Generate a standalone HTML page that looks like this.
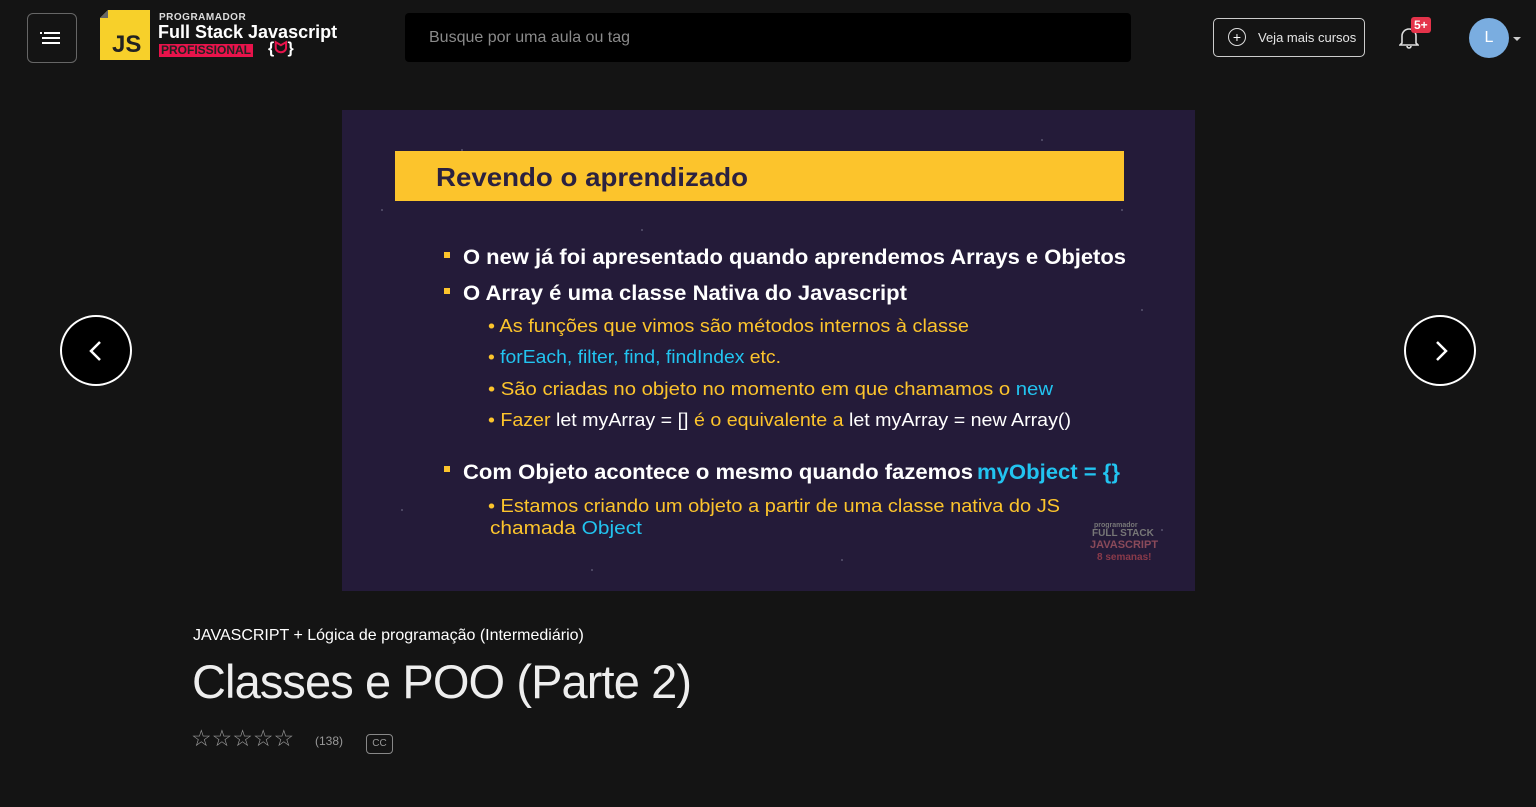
<!DOCTYPE html>
<html><head><meta charset="utf-8"><style>
body{margin:0;width:1536px;height:807px;background:#141414;overflow:hidden;font-family:"Liberation Sans",sans-serif;position:relative}
.a{position:absolute}
</style></head><body>
<div class="a" style="left:27px;top:13px;width:50px;height:50px;border:1px solid #666;border-radius:6px;box-sizing:border-box"></div>
<svg class="a" style="left:40px;top:30px" width="22" height="16"><rect x="0" y="2" width="2" height="2" fill="#fff"/><rect x="4" y="2" width="16" height="2" fill="#fff"/><rect x="2" y="7" width="18" height="2" fill="#fff"/><rect x="2" y="12" width="18" height="2" fill="#fff"/></svg>
<svg class="a" style="left:100px;top:10px" width="52" height="50"><path d="M8 0H50V50H0V8Z" fill="#f7d02a"/><path d="M0 8L8 0V8Z" fill="#666"/><text x="12" y="42" font-family="Liberation Sans" font-weight="bold" font-size="24" fill="#222">JS</text></svg>
<div class="a" style="left:159px;top:12px;color:#ddd;font-weight:bold;font-size:10px;letter-spacing:.5px">PROGRAMADOR</div>
<div class="a" style="left:158px;top:22px;color:#fff;font-weight:bold;font-size:18px">Full Stack Javascript</div>
<div class="a" style="left:159px;top:44px;background:#e8134b;color:#222;font-weight:bold;font-size:12px;line-height:13px;padding:0 2px">PROFISSIONAL</div>
<div class="a" style="left:268px;top:40px;color:#fff;font-weight:bold;font-size:16px">{<span style="color:#e8134b">ᗢ</span>}</div>
<div class="a" style="left:405px;top:13px;width:726px;height:49px;background:#000;border-radius:4px"></div>
<div class="a" style="left:429px;top:29px;color:#8a8a8a;font-size:16px">Busque por uma aula ou tag</div>
<div class="a" style="left:1213px;top:18px;width:152px;height:39px;border:1px solid #ccc;border-radius:5px;box-sizing:border-box"></div>
<div class="a" style="left:1228px;top:28px;width:18px;height:18px;border:1px solid #ddd;border-radius:50%;box-sizing:border-box;color:#fff;font-size:14px;line-height:16px;text-align:center">+</div>
<div class="a" style="left:1258px;top:30px;color:#e5e5e5;font-size:13px">Veja mais cursos</div>
<svg class="a" style="left:1399px;top:27px" width="20" height="22"><path d="M3 16V9a7 7 0 0 1 14 0v7l2 2H1z M8 19a2 2 0 0 0 4 0" fill="none" stroke="#ddd" stroke-width="1.6"/></svg>
<div class="a" style="left:1411px;top:17px;background:#e4334a;color:#fff;font-weight:bold;font-size:12px;padding:1px 3px;border-radius:3px">5+</div>
<div class="a" style="left:1469px;top:18px;width:40px;height:40px;border-radius:50%;background:#7aade0;color:#fff;font-size:16px;line-height:40px;text-align:center">L</div>
<div class="a" style="left:1513px;top:37px;border:4px solid transparent;border-top:4px solid #ccc"></div>

<svg class="a" style="left:342px;top:110px" width="853" height="481" font-family="Liberation Sans">
<rect width="853" height="481" fill="#241b39"/>
<g fill="#5a5470"><circle cx="40" cy="100" r="1"/><circle cx="120" cy="40" r="1"/><circle cx="300" cy="120" r="1"/><circle cx="700" cy="30" r="1"/><circle cx="800" cy="200" r="1"/><circle cx="60" cy="400" r="1"/><circle cx="820" cy="420" r="1"/><circle cx="500" cy="450" r="1"/><circle cx="250" cy="460" r="1"/><circle cx="780" cy="100" r="1"/></g>
<rect x="53" y="41" width="729" height="50" fill="#fcc42c"/>
<text x="94" y="76" font-size="26" font-weight="bold" fill="#2b2140" textLength="312" lengthAdjust="spacingAndGlyphs">Revendo o aprendizado</text>
<rect x="102" y="142" width="6" height="6" fill="#fcc42c"/><rect x="102" y="178" width="6" height="6" fill="#fcc42c"/><rect x="102" y="356" width="6" height="6" fill="#fcc42c"/>
<g font-weight="bold" font-size="21" fill="#fff">
<text x="121" y="154" textLength="663" lengthAdjust="spacingAndGlyphs">O new já foi apresentado quando aprendemos Arrays e Objetos</text>
<text x="121" y="190" textLength="444" lengthAdjust="spacingAndGlyphs">O Array é uma classe Nativa do Javascript</text>
<text x="121" y="369" textLength="510" lengthAdjust="spacingAndGlyphs">Com Objeto acontece o mesmo quando fazemos</text>
<text x="635" y="369" fill="#22c4f0" textLength="143" lengthAdjust="spacingAndGlyphs">myObject = {}</text>
</g>
<g font-size="18" fill="#fcc42c">
<text x="146" y="222" textLength="481" lengthAdjust="spacingAndGlyphs">• As funções que vimos são métodos internos à classe</text>
<text x="146" y="253" textLength="293" lengthAdjust="spacingAndGlyphs"><tspan>• </tspan><tspan fill="#22c4f0">forEach, filter, find, findIndex</tspan> etc.</text>
<text x="146" y="285" textLength="565" lengthAdjust="spacingAndGlyphs">• São criadas no objeto no momento em que chamamos o <tspan fill="#22c4f0">new</tspan></text>
<text x="146" y="316" textLength="583" lengthAdjust="spacingAndGlyphs">• Fazer <tspan fill="#fff">let myArray = []</tspan> é o equivalente a <tspan fill="#fff">let myArray = new Array()</tspan></text>
<text x="146" y="402" textLength="572" lengthAdjust="spacingAndGlyphs">• Estamos criando um objeto a partir de uma classe nativa do JS</text>
<text x="148" y="424" textLength="152" lengthAdjust="spacingAndGlyphs">chamada <tspan fill="#22c4f0">Object</tspan></text>
</g>
<g font-weight="bold" fill="#777"><text x="752" y="417" font-size="7">programador</text><text x="750" y="426" font-size="10">FULL STACK</text><text x="748" y="438" font-size="11" fill="#8a4a5a">JAVASCRIPT</text><text x="755" y="450" font-size="10" fill="#8a3a4a">8 semanas!</text></g>
</svg>

<div class="a" style="left:60px;top:315px;width:72px;height:71px;border:2px solid #fff;border-radius:50%;background:#000;box-sizing:border-box"></div>
<svg class="a" style="left:86px;top:340px" width="20" height="22"><path d="M14 2L5 11L14 20" fill="none" stroke="#fff" stroke-width="2.5"/></svg>
<div class="a" style="left:1404px;top:315px;width:72px;height:71px;border:2px solid #fff;border-radius:50%;background:#000;box-sizing:border-box"></div>
<svg class="a" style="left:1432px;top:340px" width="20" height="22"><path d="M5 2L14 11L5 20" fill="none" stroke="#fff" stroke-width="2.5"/></svg>

<div class="a" style="left:193px;top:627px;color:#fff;font-size:16px">JAVASCRIPT + Lógica de programação (Intermediário)</div>
<div class="a" style="left:192px;top:654px;color:#eee;font-size:47px;font-weight:normal;letter-spacing:-0.9px">Classes e POO (Parte 2)</div>
<div class="a" style="left:191px;top:725px;color:#999;font-size:23px;letter-spacing:0px">☆☆☆☆☆</div>
<div class="a" style="left:315px;top:734px;color:#999;font-size:12px">(138)</div>
<div class="a" style="left:366px;top:734px;width:27px;height:20px;border:1px solid #888;border-radius:4px;box-sizing:border-box;color:#999;font-size:10px;line-height:18px;text-align:center">CC</div>
</body></html>
